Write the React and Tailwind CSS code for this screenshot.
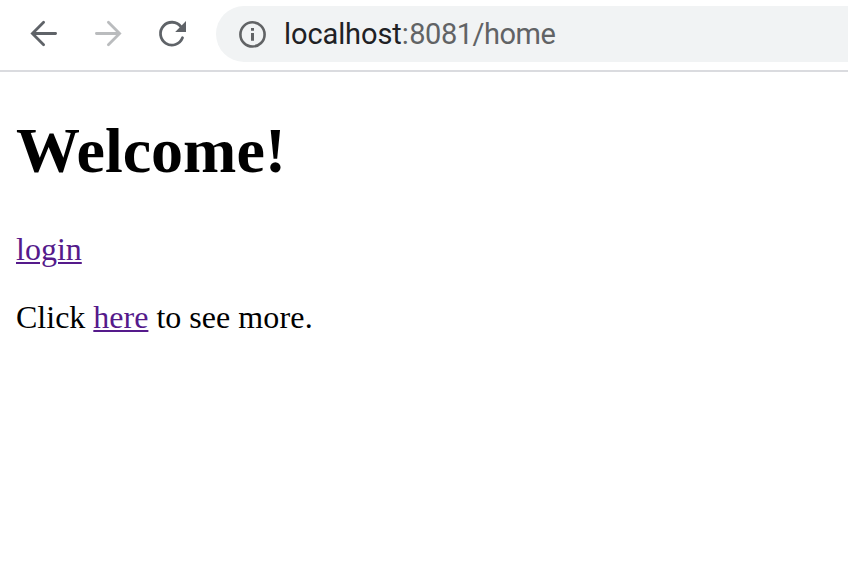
export default function App() {
  return (
    <div className="h-[572px] w-full overflow-hidden bg-white text-black">
      <header className="flex h-[72px] items-start border-b-2 border-[#dadbdf] bg-white pt-[6px]">
        <nav className="flex h-14 items-center gap-4 pl-5">
          <svg className="size-12" viewBox="0 0 48 48" fill="none" stroke="#5f6368" strokeWidth="2.8" strokeLinecap="round">
            <path d="M35.6 23.5H13M23.6 12.3L12.4 23.5L23.6 34.7" />
          </svg>
          <svg className="size-12" viewBox="0 0 48 48" fill="none" stroke="#babcbe" strokeWidth="2.8" strokeLinecap="round">
            <path d="M12.4 23.5H35M24.4 12.3L35.6 23.5L24.4 34.7" />
          </svg>
          <svg className="size-12" viewBox="0 0 48 48" fill="none">
            <path d="M33 16.8A11.4 11.4 0 1 0 34.5 27.8" stroke="#5f6368" strokeWidth="2.8" strokeLinecap="round" />
            <path d="M38 11V22H27.2Z" fill="#5f6368" />
          </svg>
        </nav>
        <div className="ml-5 flex h-14 flex-1 items-center rounded-l-full bg-[#f1f3f4] pl-[22px]">
          <svg className="size-7" viewBox="0 0 28 28" fill="none" stroke="#616365" strokeWidth="2.6">
            <circle cx="14.5" cy="14.4" r="12.1" />
            <path d="M14.5 13V20.8M14.5 8V10.8" strokeWidth="3" />
          </svg>
          <span className="ml-[18px] font-[Roboto,sans-serif] text-[29px] leading-10 tracking-[-0.5px] text-[#616365]">
            <span className="tracking-[-0.1px] text-[#202124]">localhost</span><span className="tracking-[0.6px]">:</span>8081/home
          </span>
        </div>
      </header>
      <main className="px-4 pt-[42px] font-['Liberation_Serif',serif] text-[32px] leading-9">
        <h1 className="text-[64px] leading-[74px] font-bold">Welcome!</h1>
        <p className="mt-[43px]"><a href="#login" className="text-[#551a8b] underline decoration-2 underline-offset-2">login</a></p>
        <p className="mt-8">Click <a href="#here" className="text-[#551a8b] underline decoration-2 underline-offset-2">here</a> to see <span className="tracking-[0.2px]">more.</span></p>
      </main>
    </div>
  );
}
